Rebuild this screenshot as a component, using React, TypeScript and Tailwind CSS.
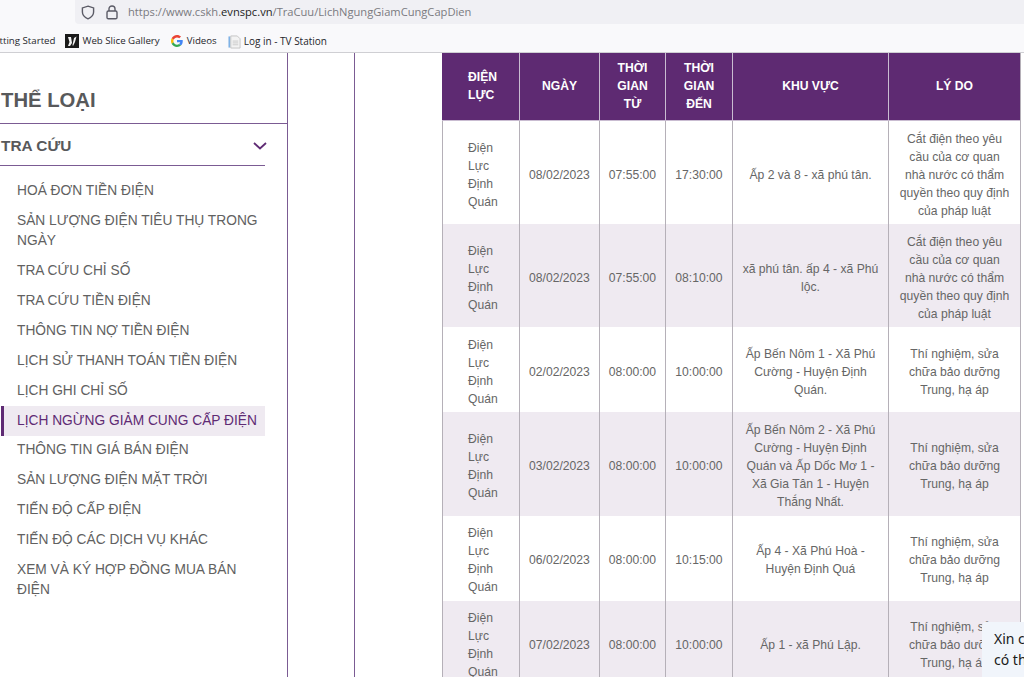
import React from "react";

const rows = [
  { d: "08/02/2023", a: "07:55:00", b: "17:30:00", k: "Ấp 2 và 8 - xã phú tân.", l: "Cắt điện theo yêu cầu của cơ quan nhà nước có thẩm quyền theo quy định của pháp luật" },
  { d: "08/02/2023", a: "07:55:00", b: "08:10:00", k: "xã phú tân. ấp 4 - xã Phú lộc.", l: "Cắt điện theo yêu cầu của cơ quan nhà nước có thẩm quyền theo quy định của pháp luật" },
  { d: "02/02/2023", a: "08:00:00", b: "10:00:00", k: "Ấp Bến Nôm 1 - Xã Phú Cường - Huyện Định Quán.", l: "Thí nghiệm, sửa chữa bảo dưỡng Trung, hạ áp" },
  { d: "03/02/2023", a: "08:00:00", b: "10:00:00", k: "Ấp Bến Nôm 2 - Xã Phú Cường - Huyện Định Quán và Ấp Dốc Mơ 1 - Xã Gia Tân 1 - Huyện Thắng Nhất.", l: "Thí nghiệm, sửa chữa bảo dưỡng Trung, hạ áp" },
  { d: "06/02/2023", a: "08:00:00", b: "10:15:00", k: "Ấp 4 - Xã Phú Hoà - Huyện Định Quá", l: "Thí nghiệm, sửa chữa bảo dưỡng Trung, hạ áp" },
  { d: "07/02/2023", a: "08:00:00", b: "10:00:00", k: "Ấp 1 - xã Phú Lập.", l: "Thí nghiệm, sửa chữa bảo dưỡng Trung, hạ áp" },
];

const menu = [
  "HOÁ ĐƠN TIỀN ĐIỆN",
  "SẢN LƯỢNG ĐIỆN TIÊU THỤ TRONG NGÀY",
  "TRA CỨU CHỈ SỐ",
  "TRA CỨU TIỀN ĐIỆN",
  "THÔNG TIN NỢ TIỀN ĐIỆN",
  "LỊCH SỬ THANH TOÁN TIỀN ĐIỆN",
  "LỊCH GHI CHỈ SỐ",
  "LỊCH NGỪNG GIẢM CUNG CẤP ĐIỆN",
  "THÔNG TIN GIÁ BÁN ĐIỆN",
  "SẢN LƯỢNG ĐIỆN MẶT TRỜI",
  "TIẾN ĐỘ CẤP ĐIỆN",
  "TIẾN ĐỘ CÁC DỊCH VỤ KHÁC",
  "XEM VÀ KÝ HỢP ĐỒNG MUA BÁN ĐIỆN",
];

const heads = ["ĐIỆN LỰC", "NGÀY", "THỜI GIAN TỪ", "THỜI GIAN ĐẾN", "KHU VỰC", "LÝ DO"];

function Shield() {
  return (
    <svg width="14" height="15" viewBox="0 0 14 15" fill="none" stroke="#5b5b66" strokeWidth="1.4">
      <path d="M7 1.2 L12.6 2.9 V7 C12.6 10.4 10 12.6 7 13.8 C4 12.6 1.4 10.4 1.4 7 V2.9 Z" />
    </svg>
  );
}
function Lock() {
  return (
    <svg width="12" height="15" viewBox="0 0 12 15" fill="none" stroke="#5b5b66" strokeWidth="1.4">
      <rect x="1" y="6" width="10" height="7.8" rx="1.4" />
      <path d="M3 6 V3.8 C3 2 4.3 1 6 1 C7.7 1 9 2 9 3.8 V6" />
    </svg>
  );
}
function Slice() {
  return (
    <svg width="14" height="14" viewBox="0 0 14 14">
      <rect width="14" height="14" fill="#1a1a1a" />
      <path d="M3 3 L6 3 L7 9 L5 12 L3 12 L4.5 8 Z" fill="#f4f4f4" />
      <path d="M9 4 L11.5 2.5 L10 8 L8 12 L7.5 11 Z" fill="#f4f4f4" />
    </svg>
  );
}
function GoogleG() {
  return (
    <svg width="12" height="12" viewBox="0 0 48 48">
      <path fill="#EA4335" d="M24 9.5c3.5 0 6.7 1.2 9.2 3.6l6.9-6.9C35.9 2.4 30.5 0 24 0 14.6 0 6.5 5.4 2.6 13.2l8 6.2C12.5 13.7 17.8 9.5 24 9.5z" />
      <path fill="#4285F4" d="M47 24.5c0-1.6-.1-3.1-.4-4.5H24v9h12.9c-.6 3-2.2 5.5-4.8 7.2l7.7 6C44.3 38 47 31.8 47 24.5z" />
      <path fill="#FBBC05" d="M10.5 28.6c-.5-1.4-.8-3-.8-4.6s.3-3.2.8-4.6l-8-6.2C.9 16.5 0 20.1 0 24s.9 7.5 2.6 10.8l7.9-6.2z" />
      <path fill="#34A853" d="M24 48c6.5 0 11.9-2.1 15.9-5.8l-7.7-6c-2.2 1.4-4.9 2.3-8.2 2.3-6.2 0-11.5-4.2-13.4-9.8l-8 6.2C6.5 42.6 14.6 48 24 48z" />
    </svg>
  );
}
function DocIcon() {
  return (
    <svg width="13" height="14" viewBox="0 0 14 14" fill="none">
      <rect x="0.5" y="1" width="2" height="12" fill="#7fb2e5" />
      <path d="M3 0.5 H10 L13 3.5 V13.5 H3 Z" fill="#f3f3f3" stroke="#c4c4c4" />
      <path d="M5 6 H11 M5 8 H11 M5 10 H11" stroke="#c9c9c9" />
    </svg>
  );
}

export default function App() {
  const cell = "border-r border-[#b5b0b8] px-[8px] pt-[8.6px] pb-[4.55px] text-center align-middle";
  return (
    <div className="relative h-[677px] w-[1024px] overflow-hidden bg-white font-['Liberation_Sans',Arial,sans-serif]">
      <header className="h-[53px] overflow-hidden border-b border-[#cfcfd3] bg-[#f9f9fb] font-['Open_Sans','Noto_Sans',sans-serif]">
        <div className="ml-[75px] flex h-[24px] items-center rounded-bl-[4px] bg-[#f0f0f4] pl-[6px]">
          <Shield />
          <span className="ml-[11px]"><Lock /></span>
          <span className="ml-[10px] text-[11.15px] text-[#7a7a80]">
            https://www.cskh.<span className="text-[#1c1b22]">evnspc.vn</span>/TraCuu/LichNgungGiamCungCapDien
          </span>
        </div>
        <div className="flex h-[28px] items-center pt-[7px] text-[9.7px] text-[#26262c]">
          <span className="ml-[-13px]">Getting Started</span>
          <span className="ml-[10px] flex items-center gap-[3px]"><Slice />Web Slice Gallery</span>
          <span className="ml-[11px] flex items-center gap-[4px]"><GoogleG />Videos</span>
          <span className="ml-[11px] flex items-center gap-[3px]"><DocIcon /><span className="text-[10px]">Log in - TV Station</span></span>
        </div>
      </header>

      <main className="flex items-start">
        <aside className="h-[624px] w-[288px] shrink-0 border-r border-[#7b5b93]">
          <h2 className="flex h-[71px] items-end border-b border-[#7b5b93] pb-[11px] pl-[1px] text-[20.3px] font-bold leading-[24px] text-[#58595b]">
            THỂ LOẠI
          </h2>
          <div className="w-[265px]">
            <div className="flex h-[42px] items-center justify-between border-b border-[#7b5b93] pl-[1px] pt-[3px]">
              <span className="text-[15.4px] font-bold text-[#58595b]">TRA CỨU</span>
              <svg className="mr-[-2px]" width="14" height="8" viewBox="0 0 14 8" fill="none" stroke="#5f2b74" strokeWidth="1.8">
                <path d="M1 1 L7 6.5 L13 1" />
              </svg>
            </div>
            <ul className="pt-[10px] text-[13.75px] leading-[20px] text-[#616161]">
              {menu.map((m, i) => (
                <li
                  key={m}
                  className={
                    i === 7
                      ? "ml-[1px] whitespace-nowrap border-l-[3px] border-[#5f2b74] bg-[#efeaf1] py-[4.98px] pl-[13px] text-[#5f2b74]"
                      : "py-[4.98px] pl-[17px]"
                  }
                >
                  {m}
                </li>
              ))}
            </ul>
          </div>
        </aside>
        <div className="h-[624px] w-[67px] shrink-0 border-r border-[#7b5b93]" />
        <div className="ml-[87px] w-[579px] shrink-0">
          <table className="w-[579px] table-fixed border-separate border-spacing-0 border-r border-[#b5b0b8] text-[12.15px] leading-[18px] text-[#666666]">
            <colgroup>
              <col className="w-[78px]" />
              <col className="w-[80px]" />
              <col className="w-[66px]" />
              <col className="w-[67px]" />
              <col className="w-[156px]" />
              <col className="w-[131px]" />
            </colgroup>
            <thead>
              <tr className="bg-[#5e2a72] text-white">
                {heads.map((h, i) => (
                  <th
                    key={h}
                    className={
                      i === 0
                        ? "h-[68px] border-r border-b border-[#c9bcd1] pb-[2px] pl-[26px] pr-[14px] text-left align-middle font-bold"
                        : "h-[68px] border-r border-b border-[#c9bcd1] px-[14px] pb-[2px] text-center align-middle font-bold last:border-r-0"
                    }
                  >
                    {h}
                  </th>
                ))}
              </tr>
            </thead>
            <tbody>
              {rows.map((r, i) => (
                <tr key={i} className={i % 2 ? "bg-[#efeaf1]" : "bg-white"}>
                  <td className="border-x border-[#b5b0b8] pl-[25px] pr-[8px] pt-[8.6px] pb-[4.55px] text-left align-middle">Điện Lực Định Quán</td>
                  <td className={cell}>{r.d}</td>
                  <td className={cell}>{r.a}</td>
                  <td className={cell}>{r.b}</td>
                  <td className={cell}>{r.k}</td>
                  <td className="px-[10px] pt-[8.6px] pb-[4.55px] text-center align-middle">{r.l}</td>
                </tr>
              ))}
            </tbody>
          </table>
        </div>
      </main>

      <div className="absolute left-[982px] top-[622px] h-[55px] w-[60px] overflow-hidden rounded-tl-[4px] bg-[#f1f5fb] px-[12px] py-[6px] font-['Noto_Sans',sans-serif] text-[14px] leading-[21px] whitespace-nowrap text-[#1a1a1a]">
        Xin chào<br />có thể
      </div>
    </div>
  );
}
